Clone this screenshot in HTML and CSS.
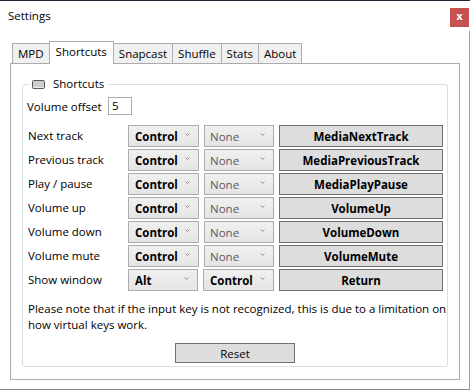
FILE: index.html
```html
<!DOCTYPE html>
<html>
<head>
<meta charset="utf-8">
<title>Settings</title>
<link rel="stylesheet" href="styles.css">
</head>
<body>
<div class="window">
  <div class="titlebar">
    <span class="title">Settings</span>
    <button class="close">x</button>
  </div>
  <div class="client">
    <div class="tabs">
      <div class="tab">MPD</div>
      <div class="tab selected">Shortcuts</div>
      <div class="tab">Snapcast</div>
      <div class="tab">Shuffle</div>
      <div class="tab">Stats</div>
      <div class="tab">About</div>
    </div>
    <div class="panel">
      <section class="group">
        <div class="group-head"><svg class="group-icon" width="13" height="9" viewBox="0 0 13 9"><rect x="0.5" y="0.5" width="12" height="8" rx="1" fill="#cdcdcd" stroke="#585858"/><line x1="1.5" y1="7.5" x2="11.5" y2="7.5" stroke="#ececec"/></svg><span>Shortcuts</span></div>
        <div class="offset">
          <span class="offset-label">Volume offset</span>
          <span class="textbox">5</span>
        </div>
        <div class="grid">
          <span class="label">Next track</span>
          <div class="combo strong">Control<svg class="chev" width="5" height="3" viewBox="0 0 5 3"><path d="M0.5 0.5 L2.5 2.5 L4.5 0.5" fill="none" stroke="#8a8a8a"/></svg></div>
          <div class="combo dim">None<svg class="chev" width="5" height="3" viewBox="0 0 5 3"><path d="M0.5 0.5 L2.5 2.5 L4.5 0.5" fill="none" stroke="#8a8a8a"/></svg></div>
          <div class="key">MediaNextTrack</div>

          <span class="label">Previous track</span>
          <div class="combo strong">Control<svg class="chev" width="5" height="3" viewBox="0 0 5 3"><path d="M0.5 0.5 L2.5 2.5 L4.5 0.5" fill="none" stroke="#8a8a8a"/></svg></div>
          <div class="combo dim">None<svg class="chev" width="5" height="3" viewBox="0 0 5 3"><path d="M0.5 0.5 L2.5 2.5 L4.5 0.5" fill="none" stroke="#8a8a8a"/></svg></div>
          <div class="key">MediaPreviousTrack</div>

          <span class="label">Play / pause</span>
          <div class="combo strong">Control<svg class="chev" width="5" height="3" viewBox="0 0 5 3"><path d="M0.5 0.5 L2.5 2.5 L4.5 0.5" fill="none" stroke="#8a8a8a"/></svg></div>
          <div class="combo dim">None<svg class="chev" width="5" height="3" viewBox="0 0 5 3"><path d="M0.5 0.5 L2.5 2.5 L4.5 0.5" fill="none" stroke="#8a8a8a"/></svg></div>
          <div class="key">MediaPlayPause</div>

          <span class="label">Volume up</span>
          <div class="combo strong">Control<svg class="chev" width="5" height="3" viewBox="0 0 5 3"><path d="M0.5 0.5 L2.5 2.5 L4.5 0.5" fill="none" stroke="#8a8a8a"/></svg></div>
          <div class="combo dim">None<svg class="chev" width="5" height="3" viewBox="0 0 5 3"><path d="M0.5 0.5 L2.5 2.5 L4.5 0.5" fill="none" stroke="#8a8a8a"/></svg></div>
          <div class="key">VolumeUp</div>

          <span class="label">Volume down</span>
          <div class="combo strong">Control<svg class="chev" width="5" height="3" viewBox="0 0 5 3"><path d="M0.5 0.5 L2.5 2.5 L4.5 0.5" fill="none" stroke="#8a8a8a"/></svg></div>
          <div class="combo dim">None<svg class="chev" width="5" height="3" viewBox="0 0 5 3"><path d="M0.5 0.5 L2.5 2.5 L4.5 0.5" fill="none" stroke="#8a8a8a"/></svg></div>
          <div class="key">VolumeDown</div>

          <span class="label">Volume mute</span>
          <div class="combo strong">Control<svg class="chev" width="5" height="3" viewBox="0 0 5 3"><path d="M0.5 0.5 L2.5 2.5 L4.5 0.5" fill="none" stroke="#8a8a8a"/></svg></div>
          <div class="combo dim">None<svg class="chev" width="5" height="3" viewBox="0 0 5 3"><path d="M0.5 0.5 L2.5 2.5 L4.5 0.5" fill="none" stroke="#8a8a8a"/></svg></div>
          <div class="key">VolumeMute</div>

          <span class="label">Show window</span>
          <div class="combo strong narrow">Alt<svg class="chev" width="5" height="3" viewBox="0 0 5 3"><path d="M0.5 0.5 L2.5 2.5 L4.5 0.5" fill="none" stroke="#8a8a8a"/></svg></div>
          <div class="combo strong shifted">Control<svg class="chev" width="5" height="3" viewBox="0 0 5 3"><path d="M0.5 0.5 L2.5 2.5 L4.5 0.5" fill="none" stroke="#8a8a8a"/></svg></div>
          <div class="key">Return</div>
        </div>
        <p class="note">Please note that if the input key is not recognized, this is due to a limitation on how virtual keys work.</p>
        <div class="reset-row"><button class="reset">Reset</button></div>
      </section>
    </div>
  </div>
</div>
</body>
</html>
```

FILE: styles.css
```css
html, body {
  margin: 0;
  padding: 0;
  background: #ffffff;
}

body {
  font-family: "Open Sans", "Noto Sans", sans-serif;
  font-size: 11.5px;
  color: #000000;
}

.window {
  width: 470px;
  height: 390px;
  box-sizing: border-box;
  border-top: 1px solid #1c2833;
  border-bottom: 1px solid #8a8a8a;
  display: flex;
  flex-direction: column;
  background: #ffffff;
}

.titlebar {
  height: 30px;
  flex: none;
  display: flex;
  justify-content: space-between;
  align-items: flex-start;
}

.title {
  margin: 7px 0 0 8px;
  line-height: 16px;
}

.close {
  margin: 7px 1px 0 0;
  width: 19px;
  height: 19px;
  padding: 0 0 2px 0;
  border: 0;
  background: #c75050;
  color: #ffffff;
  font-family: "DejaVu Sans", sans-serif;
  font-weight: bold;
  font-size: 10px;
  line-height: 17px;
}

.client {
  flex: 1;
  display: flex;
  flex-direction: column;
  border-right: 1px solid #9e9e9e;
  padding: 10px 9px 9px 10px;
  min-height: 0;
}

.tabs {
  height: 22px;
  flex: none;
  display: flex;
  align-items: flex-end;
  padding-left: 2px;
}

.tab {
  height: 20px;
  box-sizing: border-box;
  border: 1px solid #acacac;
  border-bottom: 0;
  background: #f0f0f0;
  padding: 0 5px;
  line-height: 19px;
  margin-left: -1px;
}

.tab:first-child {
  margin-left: 0;
}

.tab.selected {
  position: relative;
  z-index: 1;
  height: 23px;
  margin-bottom: -1px;
  background: #ffffff;
  padding: 0 6px;
  line-height: 19px;
}

.panel {
  flex: 1;
  display: flex;
  flex-direction: column;
  border: 1px solid #acacac;
  padding: 20px 11px 12px 11px;
  min-height: 0;
}

.group {
  flex: 1;
  display: flex;
  flex-direction: column;
  border: 1px solid #d5dfe5;
  border-radius: 3px;
  padding: 0 4px 3px 4px;
}

.group-head {
  align-self: flex-start;
  display: flex;
  align-items: center;
  height: 16px;
  margin: -9px 0 0 2px;
  padding: 0 4px 0 3px;
  background: #ffffff;
  line-height: 16px;
}

.group-icon {
  margin-right: 8px;
}

.offset {
  margin-top: 5px;
  height: 18px;
  display: flex;
  align-items: center;
}

.offset-label {
  width: 81px;
  flex: none;
}

.textbox {
  width: 24px;
  height: 18px;
  box-sizing: border-box;
  border: 1px solid #abadb3;
  padding-left: 3px;
  line-height: 16px;
}

.grid {
  margin-top: 10px;
  display: grid;
  grid-template-columns: 96px 71px 70px 164px;
  grid-auto-rows: 22px;
  column-gap: 5px;
  row-gap: 2px;
}

.label {
  align-self: center;
  padding: 0 0 1px 1px;
}

.combo {
  display: flex;
  align-items: center;
  justify-content: space-between;
  box-sizing: border-box;
  border: 1px solid #acacac;
  background: linear-gradient(#f0f0f0, #e5e5e5);
  padding: 0 8px 0 6px;
}

.combo.strong {
  font-weight: bold;
}

.combo.dim {
  color: #5a5a5a;
  padding-left: 5px;
}

.combo.narrow {
  width: 70px;
}

.combo.shifted {
  margin-left: -1px;
  width: 71px;
}

.chev {
  margin-top: -3px;
}

.key {
  box-sizing: border-box;
  border: 1px solid #707070;
  background: #dddddd;
  font-weight: bold;
  display: flex;
  align-items: center;
  justify-content: center;
}

.note {
  margin: 10px -4px 0 1px;
  line-height: 16px;
}

.reset-row {
  margin-top: 10px;
  display: flex;
  justify-content: center;
}

.reset {
  width: 120px;
  height: 20px;
  border: 1px solid #707070;
  background: #dddddd;
  font-family: inherit;
  font-size: 11.5px;
  color: #000000;
  padding: 0;
}
```
